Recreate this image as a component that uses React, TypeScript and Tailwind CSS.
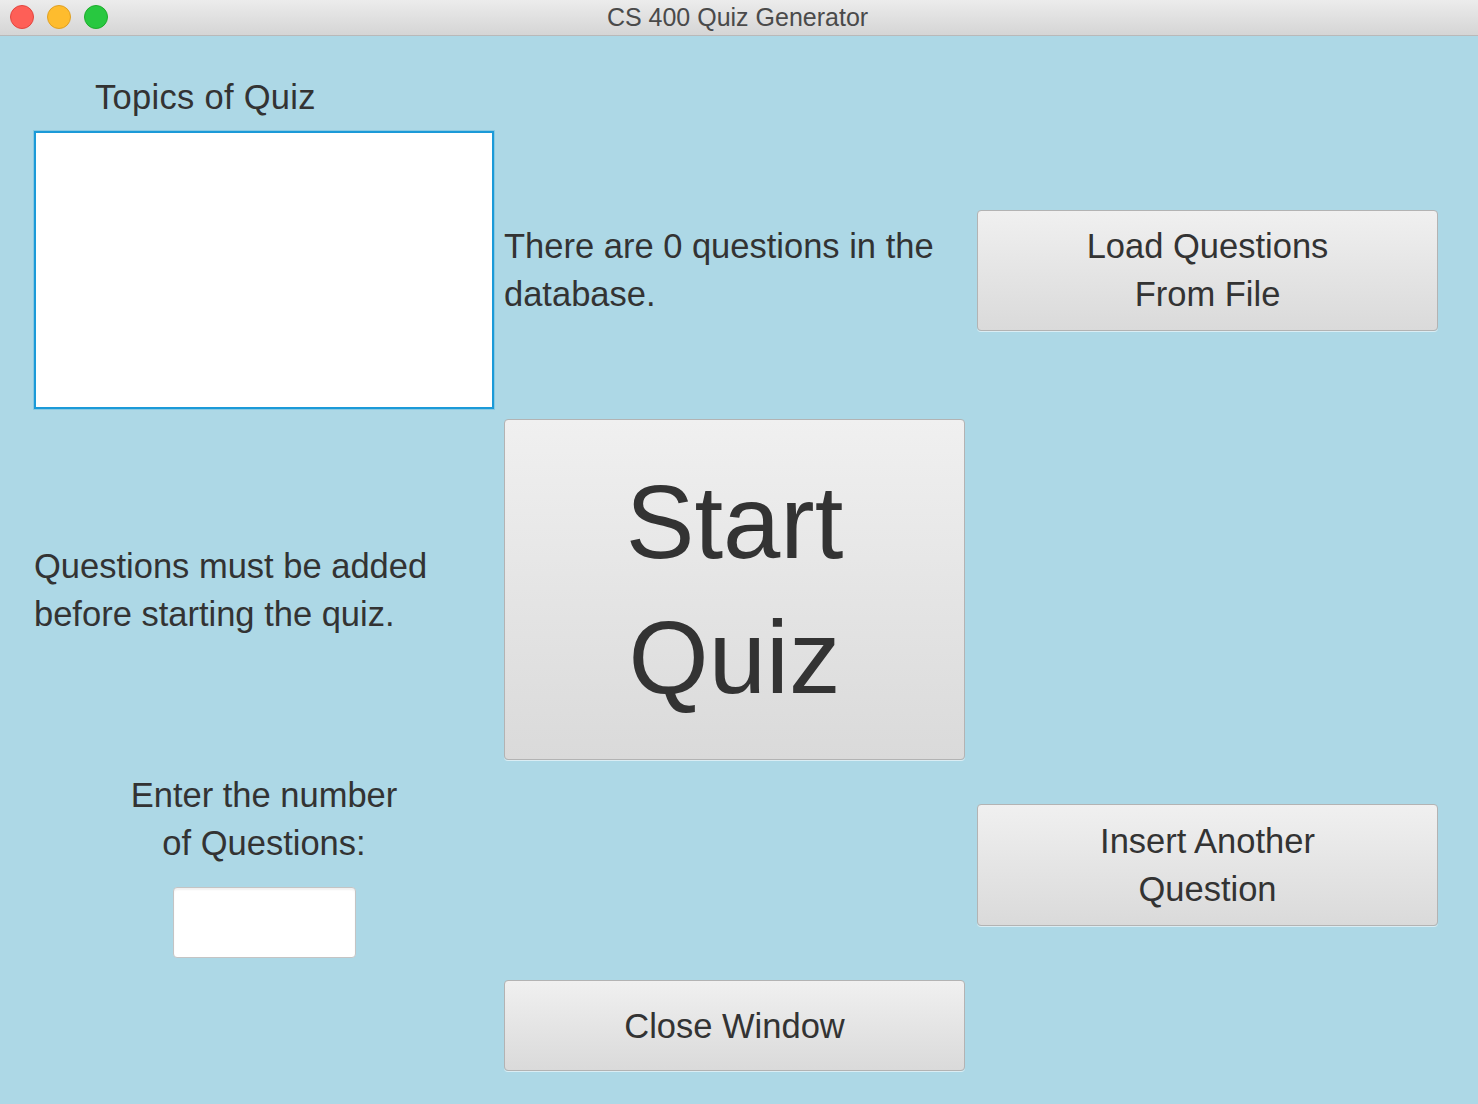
const buttonClass =
  "flex items-center justify-center rounded-[4px] border border-[#b3b3b3] bg-gradient-to-b from-[#f0f0f0] to-[#dadada] text-center text-[#333333] shadow-[0_1px_0_rgba(255,255,255,0.55)]";

function TitleBar() {
  return (
    <div className="relative flex h-[36px] items-center justify-center border-b border-[#b9b9b9] bg-gradient-to-b from-[#ececec] to-[#d5d5d5]">
      <div className="absolute left-[10px] top-[5px] flex gap-[13px]">
        <span className="h-[24px] w-[24px] rounded-full border border-[#e2463f] bg-[#fe5f57]" />
        <span className="h-[24px] w-[24px] rounded-full border border-[#dfa023] bg-[#febc2e]" />
        <span className="h-[24px] w-[24px] rounded-full border border-[#1dad2b] bg-[#28c840]" />
      </div>
      <span className="pr-[3px] text-[25px] text-[#4a4a4a]">CS 400 Quiz Generator</span>
    </div>
  );
}

export default function App() {
  return (
    <div
      className="min-h-[1104px] w-full bg-[#add8e6]"
      style={{ fontFamily: '"Liberation Sans", Arial, sans-serif' }}
    >
      <TitleBar />

      <div className="grid grid-cols-[470px_473px_461px] grid-rows-[85px_278px_341px_190px_101px] gap-y-[10px] pl-[34px] text-[34.5px] leading-[48px] text-[#333333]">
        {/* row 1 */}
        <div className="flex items-end pl-[61px]">
          <span className="tracking-[0.3px]">Topics of Quiz</span>
        </div>
        <div />
        <div />

        {/* row 2 */}
        <div className="w-[460px] border-2 border-[#1b9ad8] bg-white shadow-[0_0_0_1px_rgba(27,154,216,0.25)]" />
        <div className="flex items-center">
          <p>
            There are 0 questions in the
            <br />
            database.
          </p>
        </div>
        <div className="flex items-center">
          <button className={`${buttonClass} h-[121px] w-[461px]`}>
            Load Questions
            <br />
            From File
          </button>
        </div>

        {/* row 3 */}
        <div className="flex items-center">
          <p>
            Questions must be added
            <br />
            before starting the quiz.
          </p>
        </div>
        <button className={`${buttonClass} h-full w-[461px] text-[103px] leading-[135px]`}>
          Start
          <br />
          Quiz
        </button>
        <div />

        {/* row 4 */}
        <div className="flex w-[460px] flex-col items-center pt-[1px]">
          <p className="text-center">
            Enter the number
            <br />
            of Questions:
          </p>
          <input
            type="text"
            className="mt-[20px] h-[71px] w-[183px] rounded-[4px] border border-[#c4c4c4] bg-white shadow-[inset_0_2px_2px_rgba(0,0,0,0.06)] outline-none"
          />
        </div>
        <div />
        <div className="flex items-center">
          <button className={`${buttonClass} h-[122px] w-[461px]`}>
            Insert Another
            <br />
            Question
          </button>
        </div>

        {/* row 5 */}
        <div />
        <div className="flex items-end">
          <button className={`${buttonClass} h-[91px] w-[461px]`}>Close Window</button>
        </div>
        <div />
      </div>
    </div>
  );
}
